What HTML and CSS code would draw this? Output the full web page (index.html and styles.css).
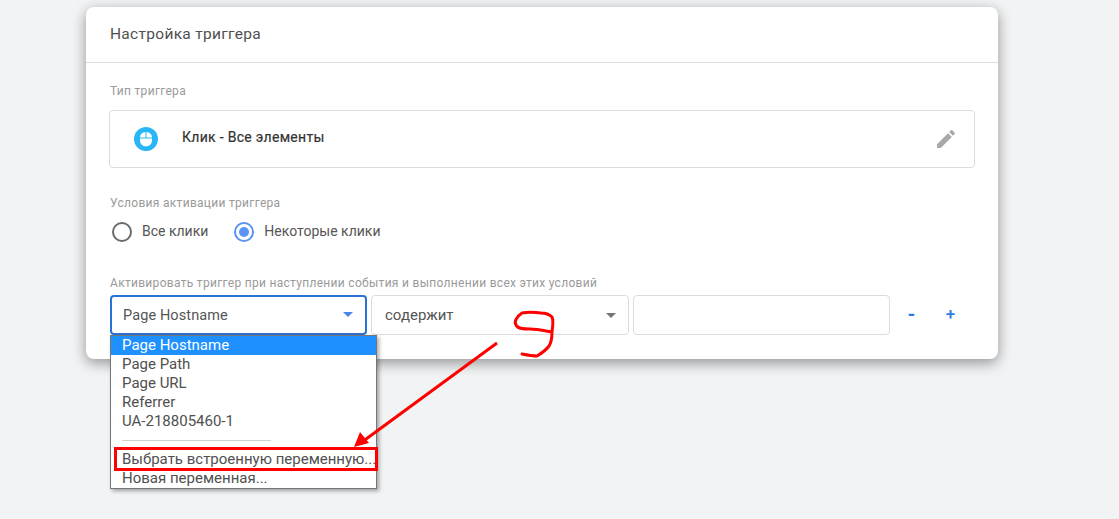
FILE: index.html
```html
<!DOCTYPE html>
<html lang="en">
  <head>
    <meta charset="UTF-8">
    <title>Настройка триггера</title>
    <link rel="stylesheet" href="styles.css">
  </head>
  <body>
    <div class="card">
      <div class="card_title">Настройка триггера</div>
      <div class="card_body">
        <div class="label label_type">Тип триггера</div>
        <div class="type_box">
          <svg class="mouse_icon" width="24" height="24" viewBox="0 0 24 24">
            <circle cx="12" cy="12" r="12" fill="#29b6f6"/>
            <path d="M6 10.500a5.500 5.500 0 0 1 5.500-5.500v5.500zM12.500 5a5.500 5.500 0 0 1 5.500 5.500h-5.500zM6 11.500h12V13.500a6 6 0 0 1-12 0z" fill="#fff"/>
          </svg>
          <div class="type_name">Клик - Все элементы</div>
          <svg class="pencil_icon" width="24" height="24" viewBox="0 0 24 24">
            <path d="M3 17.250V21h3.750L17.810 9.940l-3.750-3.750L3 17.250zM20.710 7.040a1 1 0 0 0 0-1.410l-2.340-2.340a1 1 0 0 0-1.410 0l-1.830 1.830 3.750 3.750 1.830-1.830z" fill="#a8a8a8"/>
          </svg>
        </div>
        <div class="label label_cond">Условия активации триггера</div>
        <div class="radio_row">
          <div class="radio"></div>
          <div class="radio_text">Все клики</div>
          <div class="radio radio_on"></div>
          <div class="radio_text">Некоторые клики</div>
        </div>
        <div class="label label_filter">Активировать триггер при наступлении события и выполнении всех этих условий</div>
        <div class="filter_row">
          <div class="select select_active">Page Hostname<span class="arrow arrow_blue"></span></div>
          <div class="select select_op">содержит<span class="arrow"></span></div>
          <div class="value_input"></div>
          <div class="row_btn btn_minus">-</div>
          <div class="row_btn">+</div>
        </div>
      </div>
    </div>

    <div class="dropdown">
      <div class="option option_selected">Page Hostname</div>
      <div class="option">Page Path</div>
      <div class="option">Page URL</div>
      <div class="option">Referrer</div>
      <div class="option">UA-218805460-1</div>
      <div class="separator"></div>
      <div class="option">Выбрать встроенную переменную...</div>
      <div class="option">Новая переменная...</div>
    </div>

    <!-- red marks drawn on top of the screenshot -->
    <svg class="marks" width="1119" height="519" viewBox="0 0 1119 519">
      <rect x="115.500" y="448.500" width="261" height="21" fill="none" stroke="#f00" stroke-width="3"/>
      <path d="M497 343L362 442" fill="none" stroke="#f00" stroke-width="3"/>
      <path d="M354 447L369 443L360 432z" fill="#f00"/>
      <path d="M522 313C516 317 514 322 516 325C518 329 524 329 530 329C538 329 546 331 552 332C553 325 553 319 552 317C549 314 546 313 541 313C534 312 527 312 522 313M552 332C552 338 551 343 549 346C546 350 542 353 537 356C532 356 527 355 522 354" fill="none" stroke="#f00" stroke-width="3" stroke-linecap="round" stroke-linejoin="round"/>
    </svg>
  </body>
</html>
```

FILE: styles.css
```css
body, html {
    margin: 0;
    padding: 0;
    height: 519px;
    overflow: hidden;
}
body {
    background: #f1f3f4;
    font-family: Roboto, "Noto Sans", sans-serif;
    padding-top: 7px;
    box-sizing: border-box;
}
.card {
    width: 912px;
    height: 352px;
    margin-left: 86px;
    background: #fff;
    border-radius: 8px;
    box-shadow: 0 4px 14px rgba(0, 0, 0, 0.4);
}
.card_title {
    height: 55px;
    line-height: 54px;
    padding-left: 24px;
    font-size: 15.500px;
    letter-spacing: 0.3px;
    color: #505050;
    border-bottom: 1px solid #dcdcdc;
}
.card_body {
    padding: 0 23px;
}
.label {
    font-size: 12px;
    letter-spacing: 0.3px;
    line-height: 14px;
    color: #9a9a9a;
    padding-left: 1px;
}
.label_type {
    margin-top: 21px;
}
.type_box {
    display: flex;
    align-items: center;
    height: 56px;
    margin-top: 12px;
    border: 1px solid #dcdcdc;
    border-radius: 4px;
}
.mouse_icon {
    margin: 0 0 0 24px;
}
.type_name {
    margin: 0 0 4px 24px;
    flex: 1;
    font-size: 14px;
    letter-spacing: 0.3px;
    color: #333;
    -webkit-text-stroke: 0.2px #333;
}
.pencil_icon {
    margin-right: 16px;
}
.label_cond {
    margin-top: 28px;
}
.radio_row {
    display: flex;
    align-items: center;
    height: 22px;
    margin-top: 11px;
    padding-left: 3px;
}
.radio {
    width: 16px;
    height: 16px;
    border: 2px solid #6b6b6b;
    border-radius: 50%;
    box-sizing: content-box;
}
.radio_on {
    border-color: #5c93f5;
    position: relative;
}
.radio_on::after {
    content: "";
    position: absolute;
    left: 3px;
    top: 3px;
    width: 10px;
    height: 10px;
    border-radius: 50%;
    background: #5c93f5;
}
.radio_text {
    font-size: 14px;
    color: #555;
    margin: 0 26px 3px 10px;
}
.label_filter {
    margin-top: 33px;
}
.filter_row {
    display: flex;
    align-items: center;
    margin-top: 5px;
    padding-left: 1px;
}
.select {
    box-sizing: border-box;
    position: relative;
    width: 258px;
    height: 40px;
    line-height: 39px;
    padding-left: 12px;
    margin-right: 4px;
    border: 1px solid #dcdcdc;
    border-radius: 4px;
    font-size: 14.500px;
    letter-spacing: 0.1px;
    color: #555;
}
.select_active {
    width: 257px;
    border: 2px solid #2a72d8;
    line-height: 37px;
    padding-left: 11px;
}
.select_op {
    width: 258px;
    font-size: 15px;
    letter-spacing: 0;
    padding-left: 13px;
}
.arrow {
    position: absolute;
    right: 12px;
    top: 17px;
    border-left: 5px solid transparent;
    border-right: 5px solid transparent;
    border-top: 5px solid #757575;
}
.arrow_blue {
    border-top-color: #4a86e8;
    top: 15px;
}
.value_input {
    box-sizing: border-box;
    width: 257px;
    height: 40px;
    border: 1px solid #dcdcdc;
    border-radius: 4px;
}
.row_btn {
    width: 39px;
    padding-bottom: 2px;
    text-align: center;
    font-size: 17px;
    font-weight: 500;
    color: #2a7de1;
}
.btn_minus {
    margin-left: 2px;
    font-size: 20px;
    font-weight: 700;
}
.dropdown {
    position: absolute;
    left: 110px;
    top: 335px;
    width: 265px;
    height: 152px;
    background: #fff;
    border: 1px solid #767676;
    box-shadow: 2px 2px 4px rgba(0, 0, 0, 0.35);
    font-size: 15px;
    color: #505050;
}
.option {
    height: 19px;
    line-height: 19px;
    padding-left: 11px;
    white-space: nowrap;
}
.option_selected {
    background: #1e90ff;
    color: #fff;
}
.separator {
    width: 149px;
    height: 1px;
    background: #cfcfcf;
    margin: 9px 0 9px 11px;
}
.marks {
    position: absolute;
    left: 0;
    top: 0;
}
```
